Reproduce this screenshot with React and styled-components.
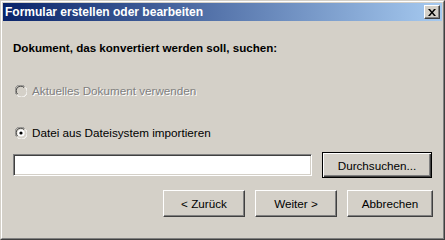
import React from 'react'
import styled, { createGlobalStyle } from 'styled-components'

const Global = createGlobalStyle`
    html, body { margin:0; padding:0; background:#D4D0C8; }
    body { font-family:"Liberation Sans", Arial, sans-serif; font-size:11.7px; }
`

const Window = styled.div`
    width:445px;
    height:240px;
    box-sizing:border-box;
    background:#D4D0C8;
    padding:2px;
    border:1px solid;
    border-color:#D4D0C8 #404040 #404040 #D4D0C8;
    display:flex;
    flex-direction:column;
    position:relative;
    &::before{
        content:'';
        position:absolute;
        inset:0;
        border:1px solid;
        border-color:#FFFFFF #808080 #808080 #FFFFFF;
        pointer-events:none;
    }
`

const TitleBar = styled.div`
    height:18px;
    display:flex;
    align-items:center;
    justify-content:space-between;
    padding:0 2px 0 2px;
    background:linear-gradient(to right, #0A246A, #A6CAF0);
    color:#fff;
    font-weight:bold;
    font-size:12px;
    font-family:"Liberation Sans", Arial, sans-serif;
`

const CloseButton = styled.div`
    width:16px;
    height:14px;
    box-sizing:border-box;
    background:#D4D0C8;
    border:1px solid;
    border-color:#FFFFFF #404040 #404040 #FFFFFF;
    box-shadow:inset -1px -1px 0 #808080;
    display:flex;
    align-items:center;
    justify-content:center;
`

const Body = styled.div`
    flex:1;
    display:flex;
    flex-direction:column;
    padding:20px 9px 0 10px;
    color:#000;
`

const Heading = styled.div`
    font-weight:bold;
    font-size:11.6px;
    line-height:13px;
    height:13px;
`

const RadioRow = styled.label`
    display:flex;
    align-items:center;
    height:13px;
    margin-top:${p => p.$top}px;
    padding-left:2px;
    gap:5px;
    color:${p => p.$disabled ? '#808080' : '#000'};
    text-shadow:${p => p.$disabled ? '1px 1px 0 #FFFFFF' : 'none'};
`

const InputRow = styled.div`
    display:flex;
    align-items:center;
    margin-top:13px;
    height:26px;
    gap:10px;
`

const TextField = styled.div`
    width:299px;
    height:22px;
    box-sizing:border-box;
    background:#fff;
    border:1px solid;
    border-color:#808080 #FFFFFF #FFFFFF #808080;
    box-shadow:inset 1px 1px 0 #404040, inset -1px -1px 0 #D4D0C8;
`

const Button = styled.div`
    width:${p => p.$w}px;
    height:${p => p.$h || 27}px;
    box-sizing:border-box;
    background:#D4D0C8;
    display:flex;
    align-items:center;
    justify-content:center;
    border:1px solid;
    border-color:${p => p.$default ? '#000' : '#FFFFFF #404040 #404040 #FFFFFF'};
    box-shadow:${p => p.$default
        ? 'inset 1px 1px 0 #FFFFFF, inset -1px -1px 0 #404040, inset -2px -2px 0 #808080'
        : 'inset -1px -1px 0 #808080'};
    color:#000;
    font-size:11.7px;
`

const ButtonRow = styled.div`
    display:flex;
    justify-content:flex-end;
    gap:10px;
    margin-top:12px;
`

const Radio = ({ checked, disabled }) => (
    <svg width="12" height="12" viewBox="0 0 12 12">
        <path d="M1.5 9.5 A5 5 0 0 1 9.5 1.5" fill="none" stroke="#808080" />
        <path d="M2.5 9 A4 4 0 0 1 9 2.5" fill="none" stroke="#404040" />
        <path d="M2.5 10.5 A5 5 0 0 0 10.5 2.5" fill="none" stroke="#FFFFFF" />
        <circle cx="6" cy="6" r="3.6" fill={disabled ? '#D4D0C8' : '#FFFFFF'} />
        {checked && <circle cx="6" cy="6" r="1.6" fill="#000" />}
    </svg>
)

export default function App() {
    return <>
        <Global />
        <Window>
            <TitleBar>
                <span>Formular erstellen oder bearbeiten</span>
                <CloseButton>
                    <svg width="8" height="7" viewBox="0 0 8 7">
                        <path d="M0 0h2l2 2.5L6 0h2L5 3.5 8 7H6L4 4.5 2 7H0l3-3.5z" fill="#000" />
                    </svg>
                </CloseButton>
            </TitleBar>
            <Body>
                <Heading>Dokument, das konvertiert werden soll, suchen:</Heading>
                <RadioRow $top={30} $disabled>
                    <Radio disabled />
                    Aktuelles Dokument verwenden
                </RadioRow>
                <RadioRow $top={29}>
                    <Radio checked />
                    Datei aus Dateisystem importieren
                </RadioRow>
                <InputRow>
                    <TextField />
                    <Button $w={110} $h={26} $default>Durchsuchen...</Button>
                </InputRow>
                <ButtonRow>
                    <Button $w={82}>&lt; Zurück</Button>
                    <Button $w={82}>Weiter &gt;</Button>
                    <Button $w={86}>Abbrechen</Button>
                </ButtonRow>
            </Body>
        </Window>
    </>
}
